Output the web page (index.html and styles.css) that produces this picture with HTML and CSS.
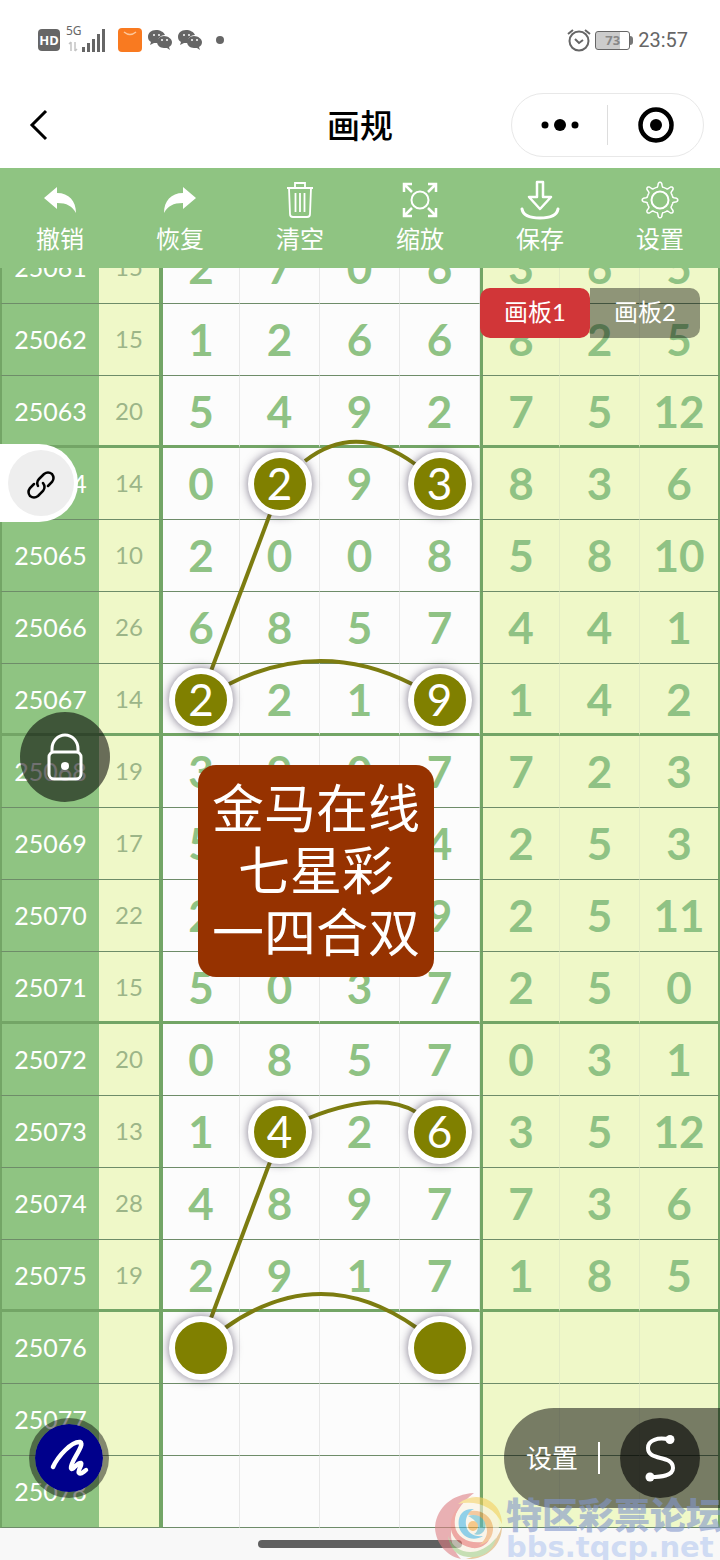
FILE: index.html
```html
<!DOCTYPE html>
<html lang="zh-CN">

<head>
  <meta charset="UTF-8" />
  <meta name="viewport" content="width=device-width, initial-scale=1.0" />
  <title>画规</title>
  <link rel="stylesheet" href="styles.css">
</head>

<body>
  <header class="status">
    <div class="status-left">
      <span class="hd">HD</span>
      <div class="signal">
        <span class="net">5G</span>
        <svg width="40" height="28" viewBox="0 0 40 28">
          <path d="M5 16v9M3 18l2-2M9 16v9M11 23l-2 2" stroke="#c4c4c4" stroke-width="1.5" fill="none" />
          <path d="M17.500 21v5M22.500 17v9M27.500 13v13M32.500 8v18M37.500 3v23" stroke="#666" stroke-width="3" />
        </svg>
      </div>
      <svg width="24" height="24" viewBox="0 0 24 24">
        <rect width="24" height="24" rx="4" fill="#f97a20" />
        <path d="M6 4q6 5 12 0" stroke="#fdc79b" stroke-width="1.5" fill="none" />
      </svg>
      <svg class="wechat" width="24" height="20" viewBox="0 0 24 20"><use href="#wechat" /></svg>
      <svg class="wechat" width="24" height="20" viewBox="0 0 24 20"><use href="#wechat" /></svg>
      <span class="more-dot"></span>
    </div>
    <div class="status-right">
      <svg width="24" height="24" viewBox="0 0 24 24" fill="none" stroke="#666" stroke-width="2">
        <circle cx="12" cy="13" r="9.500" />
        <path d="M8 11l4 4 4-3M1 6l5-4M23 6l-5-4" />
      </svg>
      <div class="battery"><span>73</span></div>
      <time>23:57</time>
    </div>
  </header>

  <nav class="nav">
    <button class="back" aria-label="返回">
      <svg width="20" height="32" viewBox="0 0 20 32" fill="none" stroke="#000" stroke-width="3">
        <path d="M18 2L4 16l14 14" />
      </svg>
    </button>
    <h1>画规</h1>
    <div class="capsule">
      <button aria-label="更多">
        <svg width="40" height="16" viewBox="0 0 40 16">
          <circle cx="5" cy="8" r="3.500" />
          <circle cx="20" cy="8" r="6" />
          <circle cx="35" cy="8" r="3.500" />
        </svg>
      </button>
      <button aria-label="关闭">
        <svg width="36" height="36" viewBox="0 0 36 36">
          <circle cx="18" cy="18" r="15.500" fill="none" stroke="#000" stroke-width="4.500" />
          <circle cx="18" cy="18" r="6" />
        </svg>
      </button>
    </div>
  </nav>

  <div class="toolbar">
    <button>
      <svg width="40" height="40" viewBox="0 0 40 40">
        <path d="M4 18L17 7v6c12 0 19 8 19 20-4-7-9-10-19-10v6z" fill="#fff" />
      </svg>
      撤销
    </button>
    <button>
      <svg width="40" height="40" viewBox="0 0 40 40">
        <path d="M36 18L23 7v6C11 13 4 21 4 33c4-7 9-10 19-10v6z" fill="#fff" />
      </svg>
      恢复
    </button>
    <button>
      <svg width="40" height="40" viewBox="0 0 40 40" fill="none" stroke="#fff" stroke-width="1.800">
        <path d="M7 8h26M15 8V3h10v5M9 8l1 26q0 3 3 3h14q3 0 3-3l1-26M15.500 13v19M20 13v19M24.500 13v19" />
      </svg>
      清空
    </button>
    <button>
      <svg width="40" height="40" viewBox="0 0 40 40" fill="none" stroke="#fff" stroke-width="2">
        <circle cx="20" cy="20" r="8.500" />
        <path d="M4 12V4h8M4 4l8 8M28 4h8v8M36 4l-8 8M4 28v8h8M4 36l8-8M28 36h8v-8M36 36l-8-8" stroke-width="2.500" />
      </svg>
      缩放
    </button>
    <button>
      <svg width="40" height="40" viewBox="0 0 40 40" fill="none" stroke="#fff" stroke-width="3" stroke-linecap="round" stroke-linejoin="round">
        <path d="M17 2h6v15h8L20 29 9 17h8z" stroke-width="2.500" />
        <path d="M2 29c1 6 8 9 18 9s17-3 18-9" />
      </svg>
      保存
    </button>
    <button>
      <svg width="40" height="40" viewBox="0 0 40 40" fill="none" stroke="#fff" stroke-width="1.500" stroke-linejoin="round">
        <path id="gear" />
        <circle cx="20" cy="20" r="8.500" stroke-width="2" />
      </svg>
      设置
    </button>
  </div>

  <main class="board">
    <table>
      <colgroup>
        <col class="col-period">
        <col class="col-sum">
        <col span="7">
      </colgroup>
      <tbody id="rows"></tbody>
    </table>

    <svg class="links" viewBox="0 0 560 1260" preserveAspectRatio="none">
      <path d="M145 193Q196 153 255 196" />
      <path d="M110 246L51 403" />
      <path d="M69 416Q161 370 252 416" />
      <path d="M149 850Q219 822 256 844" />
      <path d="M110 894L51 1050" />
      <path d="M65 1060Q161 992 257 1060" />
    </svg>

    <div class="tabs">
      <button class="active">画板1</button>
      <button>画板2</button>
    </div>

    <button class="share" aria-label="链接">
      <span>
        <svg width="32" height="32" viewBox="0 0 32 32" fill="none" stroke="#000" stroke-width="2.500" stroke-linecap="round">
          <path d="M13 19q-2-4 1-7l5-5q4-3 8 0 3 4 0 8l-4 4M18 16q3 4 0 8l-5 5q-4 3-8 0-3-4 0-8l4-4" />
        </svg>
      </span>
    </button>

    <button class="lock" aria-label="锁定">
      <svg width="40" height="52" viewBox="0 0 40 52" fill="none" stroke="#fff" stroke-width="3">
        <rect x="4" y="21" width="32" height="27" rx="5" />
        <path d="M7 21v-3a13 14 0 0 1 26 0v3" />
        <circle cx="20" cy="35" r="4" fill="#fff" stroke="none" />
      </svg>
    </button>

    <div class="note">金马在线<br>七星彩<br>一四合双</div>

    <button class="pen" aria-label="画笔">
      <svg width="44" height="44" viewBox="0 0 44 44" fill="none" stroke="#fff" stroke-width="4.500" stroke-linecap="round" stroke-linejoin="round">
        <path d="M6 31C11 20 25 5 33 6c6 2-10 20-9 26 1 4 6-6 10-5 2 1-4 8-2 10s4-1 7-3" />
      </svg>
    </button>

    <div class="line-tools">
      <button class="line-set">设置</button>
      <button class="line-type" aria-label="曲线">
        <svg width="40" height="52" viewBox="0 0 40 52" fill="none" stroke="#fff" stroke-width="4">
          <path d="M29 7.500C18 5 8 8 8 16c0 14 25 6 25 20 0 8-12 9-23 9" />
          <circle cx="30" cy="7.500" r="4.500" fill="#fff" stroke="none" />
          <circle cx="10" cy="45" r="4.500" fill="#fff" stroke="none" />
        </svg>
      </button>
    </div>
  </main>

  <footer class="home"><span></span></footer>

  <div class="watermark">
    <svg width="70" height="68" viewBox="0 0 70 68">
      <circle cx="35" cy="34" r="30" fill="#fbf3e0" />
      <path d="M40 1C18 2 2 16 1 36c1 16 12 28 26 31C12 52 12 22 40 1z" fill="#de7f84" />
      <path d="M24 12C44-4 68 10 68 32 60 14 42 8 24 12z" fill="#f4d060" />
      <path d="M68 34C68 54 52 68 32 67 50 62 62 52 68 34z" fill="#dcae68" />
      <path d="M14 44c8 20 32 22 48 2-4 16-16 20-28 19S16 56 14 44z" fill="#a6cf88" />
      <path d="M26 14c-14 12-14 36 12 42 8 1 14-3 17-8-14 6-32 0-34-14-1-8 1-14 5-20z" fill="#e8746c" />
      <path d="M26 24c14-12 34-2 33 14-1 10-8 14-14 15 8-6 10-14 6-21-5-9-15-11-25-8z" fill="#f0a862" />
      <path d="M40 17c-12-1-17 8-15 18 3 11 15 15 24 9-9 1-16-3-17-11-1-7 2-13 8-16z" fill="#4ab4dc" />
      <path d="M34 24c10-4 20 4 17 13-2 5-7 7-11 5 6-3 5-13-6-18z" fill="#60b8c8" />
      <circle cx="39" cy="34" r="5" fill="#f2a640" />
    </svg>
    <div>
      <strong>特区彩票论坛</strong>
      <span>bbs.tqcp.net</span>
    </div>
  </div>

  <svg width="0" height="0" class="defs">
    <symbol id="wechat" viewBox="0 0 24 20">
      <path d="M8 0C3 0 0 3 0 7c0 2 1 4 3 5l-1 3 4-2h4c-1-5 3-8 7-8-1-3-5-5-9-5z" />
      <path d="M16 6c-4 0-7 3-7 6s3 6 7 6h3l3 2-1-3c2-1 3-3 3-5 0-3-4-6-8-6z" />
      <g fill="#fff"><circle cx="6" cy="5" r="1" /><circle cx="11" cy="5" r="1" /><circle cx="14" cy="10" r="1" /><circle cx="19" cy="10" r="1" /></g>
    </symbol>
  </svg>

  <script>
    // period, sum, four drawn digits, three extra digits
    const draws = [
      [25061, 15, 2, 7, 0, 6, 3, 6, 5],
      [25062, 15, 1, 2, 6, 6, 8, 2, 5],
      [25063, 20, 5, 4, 9, 2, 7, 5, 12],
      [25064, 14, 0, 2, 9, 3, 8, 3, 6],
      [25065, 10, 2, 0, 0, 8, 5, 8, 10],
      [25066, 26, 6, 8, 5, 7, 4, 4, 1],
      [25067, 14, 2, 2, 1, 9, 1, 4, 2],
      [25068, 19, 3, 9, 0, 7, 7, 2, 3],
      [25069, 17, 5, 3, 5, 4, 2, 5, 3],
      [25070, 22, 2, 5, 6, 9, 2, 5, 11],
      [25071, 15, 5, 0, 3, 7, 2, 5, 0],
      [25072, 20, 0, 8, 5, 7, 0, 3, 1],
      [25073, 13, 1, 4, 2, 6, 3, 5, 12],
      [25074, 28, 4, 8, 9, 7, 7, 3, 6],
      [25075, 19, 2, 9, 1, 7, 1, 8, 5],
      [25076], [25077], [25078]
    ];

    // circled cells: period -> column indexes
    const marks = { 25064: [3, 5], 25067: [2, 5], 25073: [3, 5], 25076: [2, 5] };

    const tbody = document.getElementById('rows');
    draws.forEach((draw) => {
      const tr = document.createElement('tr');
      if (draw[0] % 4 === 3) tr.className = 'group-end';
      for (let i = 0; i < 9; i++) {
        const cell = document.createElement(i === 0 ? 'th' : 'td');
        const value = draw[i] === undefined ? '' : draw[i];
        if (i === 1) cell.className = 'sum';
        if (i > 1) cell.className = i < 6 ? 'num' : 'num extra';
        if (i === 2 || i === 6) cell.className += ' first';
        if ((marks[draw[0]] || []).includes(i)) {
          const mark = document.createElement('span');
          mark.className = 'mark';
          mark.textContent = value;
          cell.appendChild(mark);
        } else {
          cell.textContent = value;
        }
        tr.appendChild(cell);
      }
      tbody.appendChild(tr);
    });

    // settings gear, eight narrow teeth
    const points = [];
    for (let a = 0; a < 360; a += 3) {
      const t = a * Math.PI / 180;
      const r = 15.5 + 2.5 * Math.tanh(3 * Math.cos(8 * t) - 1.5);
      points.push((20 + r * Math.sin(t)).toFixed(1) + ' ' + (20 - r * Math.cos(t)).toFixed(1));
    }
    document.getElementById('gear').setAttribute('d', 'M' + points.join('L') + 'Z');
  </script>
</body>

</html>
```
FILE: styles.css
```css
* {
  box-sizing: border-box;
}

body {
  position: relative;
  margin: 0;
  font-family: Lato, "Noto Sans CJK SC", sans-serif;
  background: #f8f8f8;
  overflow-x: hidden;
}

button {
  border: none;
  padding: 0;
  background: none;
  font: inherit;
  color: inherit;
  cursor: pointer;
}

svg {
  display: block;
  flex: none;
}

.defs {
  position: absolute;
}

/* status bar */
.status {
  display: flex;
  justify-content: space-between;
  align-items: center;
  height: 80px;
  padding: 0 32px 0 38px;
  background: #fff;
  color: #666;
}

.status-left,
.status-right {
  display: flex;
  align-items: center;
}

.status-left {
  gap: 6px;
}

.status-right {
  gap: 4px;
}

.hd {
  width: 22px;
  border-radius: 4px;
  background: #666;
  color: #fff;
  font: bold 13px/22px "Noto Sans", sans-serif;
  text-align: center;
}

.signal {
  position: relative;
  margin-right: 6px;
}

.net {
  position: absolute;
  top: -1px;
  left: 0;
  font: 12px/12px "Noto Sans", sans-serif;
}

.wechat {
  fill: #666;
}

.more-dot {
  width: 8px;
  height: 8px;
  margin-left: 8px;
  border-radius: 50%;
  background: #666;
}

.battery {
  position: relative;
  width: 35px;
  height: 19px;
  margin-right: 4px;
  border: 1px solid #666;
  border-radius: 3px;
  background: linear-gradient(90deg, #ccc 73%, #fff 73%);
  font: bold 13px/17px "Noto Sans", sans-serif;
  color: #888;
  text-align: center;
}

.battery::after {
  content: "";
  position: absolute;
  top: 4px;
  right: -4px;
  width: 3px;
  height: 9px;
  border-radius: 0 3px 3px 0;
  background: #777;
}

.status time {
  font: 20px/24px Roboto, sans-serif;
}

/* title bar */
.nav {
  display: grid;
  grid-template-columns: 1fr auto 1fr;
  align-items: center;
  height: 88px;
  padding: 2px 16px 0 28px;
  background: #fff;
}

.back {
  justify-self: start;
}

.nav h1 {
  margin: 0 12px 0 0;
  font-size: 33px;
  font-weight: 500;
  line-height: 48px;
}

.capsule {
  display: flex;
  justify-self: end;
  align-items: center;
  width: 193px;
  height: 64px;
  border: 1px solid #e8e8e8;
  border-radius: 32px;
}

.capsule button {
  display: flex;
  flex: 1;
  justify-content: center;
  align-items: center;
  height: 40px;
}

.capsule button + button {
  border-left: 1px solid #ddd;
}

/* toolbar */
.toolbar {
  display: grid;
  grid-template-columns: repeat(6, 1fr);
  height: 100px;
  padding-top: 12px;
  background: #8fc482;
  color: #fff;
}

.toolbar button {
  display: flex;
  flex-direction: column;
  align-items: center;
  font-size: 24px;
  line-height: 38px;
}

/* number board */
.board {
  position: relative;
  height: 1260px;
  overflow: hidden;
}

table {
  width: 100%;
  margin-top: -36px;
  table-layout: fixed;
  border-collapse: separate;
  border-spacing: 0;
}

.col-period {
  width: 99px;
}

.col-sum {
  width: 61px;
}

th,
td {
  height: 72px;
  padding: 0 0 2px;
  border-bottom: 1px solid #6e8c69;
  text-align: center;
  line-height: 48px;
}

th {
  border-left: 2px solid #73a566;
  background: #8fc482;
  color: #fff;
  font-size: 25px;
  font-weight: 400;
}

.sum {
  border-right: 1px solid #73a566;
  background: #eff8c8;
  color: #9cb588;
  font-size: 24px;
}

.num {
  border-right: 1px solid #e8e8e8;
  background: #fcfcfc;
  color: #8fc284;
  font-size: 44px;
  font-weight: 700;
}

.extra {
  border-right-color: #e3ecc4;
  background: #eff8c8;
}

.num.first {
  border-left: 3px solid #73a566;
}

.extra:last-child {
  border-right: 2px solid #73a566;
}

.group-end th,
.group-end td {
  padding-bottom: 0;
  border-bottom: 3px solid #73a566;
}

.mark {
  position: relative;
  z-index: 2;
  display: block;
  width: 64px;
  height: 64px;
  margin: 2px auto 0;
  border: 6px solid #fff;
  border-radius: 50%;
  background: #808000;
  box-shadow: 0 0 10px rgba(40, 30, 60, 0.6);
  color: #fff;
  font-weight: 400;
  line-height: 51px;
}

.links {
  position: absolute;
  top: 0;
  left: 160px;
  width: calc(100% - 160px);
  height: 1260px;
  fill: none;
  stroke: #7c7c10;
  stroke-width: 4;
}

.tabs {
  position: absolute;
  top: 20px;
  right: 20px;
  display: flex;
  color: #fff;
  font-size: 24px;
  line-height: 48px;
}

.tabs button {
  width: 110px;
  padding-bottom: 2px;
  border-radius: 0 10px 10px 0;
  background: rgba(0, 0, 0, 0.4);
}

.tabs .active {
  border-radius: 10px;
  background: #d13638;
}

.share {
  position: absolute;
  top: 176px;
  left: 0;
  padding: 6px 4px 6px 8px;
  border-radius: 0 40px 40px 0;
  background: #fff;
}

.share span {
  display: flex;
  justify-content: center;
  align-items: center;
  width: 66px;
  height: 66px;
  border-radius: 50%;
  background: #eee;
}

.lock {
  position: absolute;
  top: 444px;
  left: 20px;
  display: flex;
  justify-content: center;
  align-items: center;
  width: 90px;
  height: 90px;
  border-radius: 50%;
  background: rgba(0, 0, 0, 0.56);
}

.note {
  position: absolute;
  top: 497px;
  left: 198px;
  z-index: 3;
  padding: 12px 14px 14px;
  border-radius: 18px;
  background: #963200;
  color: #fff;
  font-size: 52px;
  line-height: 62px;
  text-align: center;
}

.pen {
  position: absolute;
  bottom: 30px;
  left: 29px;
  display: flex;
  justify-content: center;
  align-items: center;
  width: 80px;
  height: 80px;
  border: 6px solid rgba(0, 0, 0, 0.45);
  border-radius: 50%;
  background: #00008b padding-box;
}

.line-tools {
  position: absolute;
  right: 0;
  bottom: 20px;
  display: flex;
  align-items: center;
  gap: 20px;
  height: 100px;
  padding: 0 20px 0 22px;
  border-radius: 50px 0 0 50px;
  background: rgba(0, 0, 0, 0.5);
  color: #fff;
}

.line-set {
  padding-right: 20px;
  border-right: 2px solid #fff;
  font-size: 26px;
  line-height: 32px;
}

.line-type {
  display: flex;
  justify-content: center;
  align-items: center;
  width: 80px;
  height: 80px;
  border-radius: 50%;
  background: rgba(0, 0, 0, 0.6);
}

/* gesture bar */
.home {
  display: flex;
  justify-content: center;
  height: 32px;
  padding-top: 12px;
}

.home span {
  width: 204px;
  height: 8px;
  border-radius: 4px;
  background: #606060;
}

.watermark {
  position: absolute;
  right: 0;
  bottom: 0;
  z-index: 4;
  display: flex;
  align-items: center;
  gap: 2px;
  width: 286px;
  height: 68px;
  overflow: hidden;
  opacity: 0.6;
  pointer-events: none;
  white-space: nowrap;
}

.watermark strong,
.watermark span {
  display: block;
}

.watermark strong {
  padding-top: 4px;
  color: #8296cc;
  font-size: 36px;
  font-weight: 900;
  line-height: 38px;
}

.watermark span {
  color: #b4c8f0;
  font: bold 29px/26px "DejaVu Sans", sans-serif;
}
```
